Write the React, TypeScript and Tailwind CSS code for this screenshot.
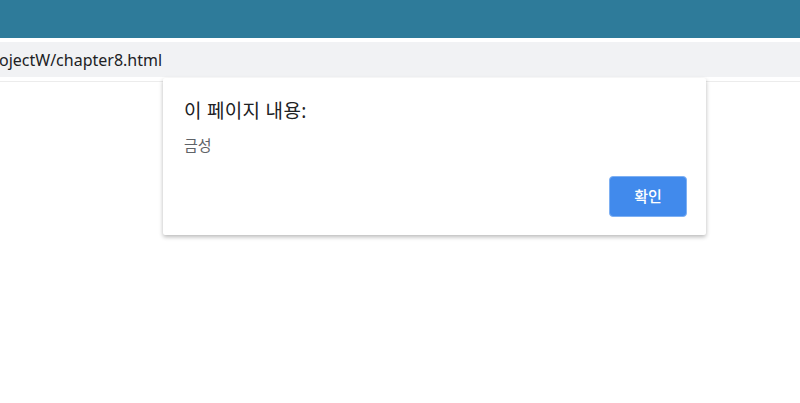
export default function App() {
  return (
    <div className="relative w-[800px] h-[403px] overflow-hidden bg-white font-['Noto_Sans','Noto_Sans_CJK_KR',sans-serif]">
      <div className="h-[38px] bg-[#2e7b9a]" />
      <div className="h-[4px] bg-white" />
      <div className="h-[35px] bg-[#f1f2f4] flex items-center">
        <span className="text-[16px] text-[#202124] leading-none -ml-[1px]">ojectW/chapter8.html</span>
      </div>
      <div className="h-[4px] bg-white" />
      <div className="h-[1px] bg-[#ececec]" />

      {/* alert dialog */}
      <div className="absolute left-[163px] top-[78px] w-[543px] h-[157px] bg-white rounded-[2px] shadow-[0_2px_4px_rgba(0,0,0,0.28)] flex flex-col">
        <div className="pl-[21px] pt-[21px] text-[19px] leading-[24px] tracking-[0.3px] text-[#202124]">
          이 페이지 내용:
        </div>
        <div className="pl-[21px] pt-[12px] text-[15px] leading-[20px] text-[#5f6368]">
          금성
        </div>
        <div className="flex-1 flex items-end justify-end pr-[19px] pb-[18px]">
          <button className="w-[78px] h-[41px] rounded-[4px] bg-[#418aec] border border-[#7eb0f3] text-white text-[15px] font-medium">
            확인
          </button>
        </div>
      </div>
    </div>
  );
}
